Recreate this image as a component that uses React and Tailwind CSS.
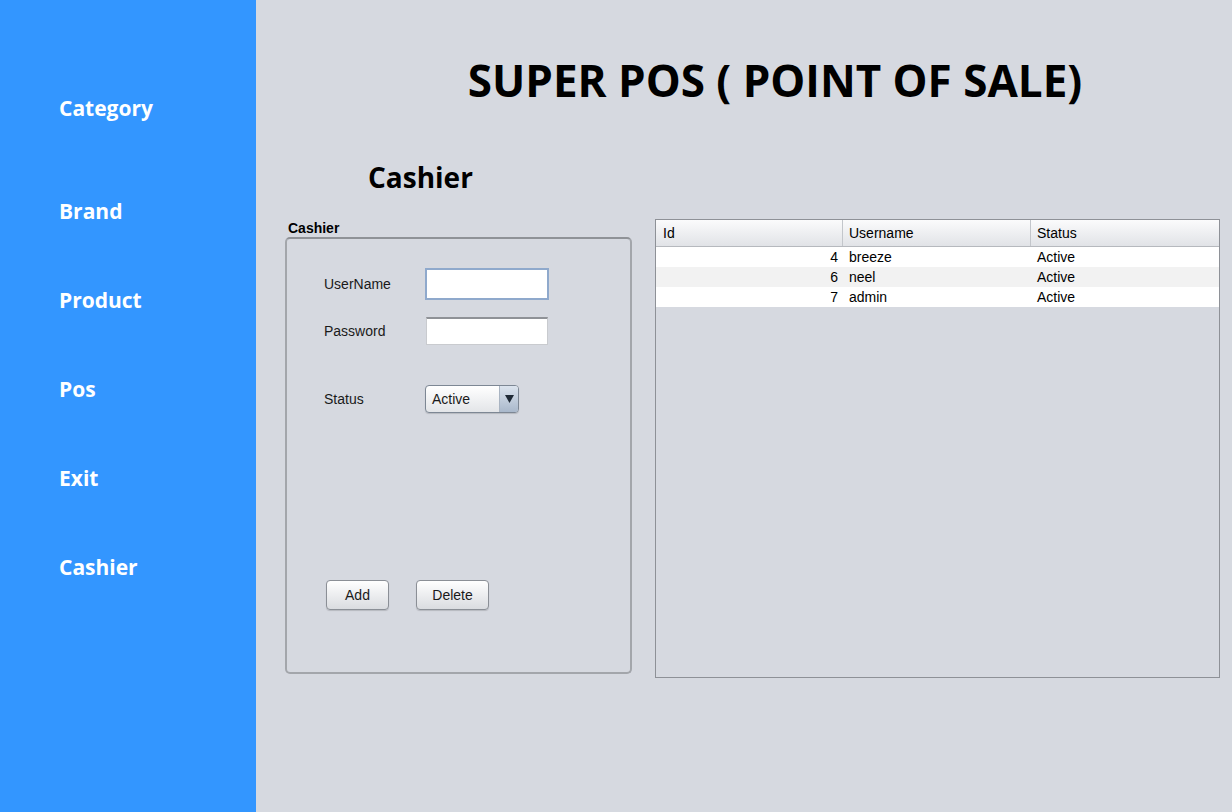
import React, { useState } from 'react';

const menuItems = [
    { label: 'Category', mt: 'mt-[93px]' },
    { label: 'Brand', mt: 'mt-[72px]' },
    { label: 'Product', mt: 'mt-[58px]' },
    { label: 'Pos', mt: 'mt-[58px]' },
    { label: 'Exit', mt: 'mt-[58px]' },
    { label: 'Cashier', mt: 'mt-[58px]' },
];

const cashiers = [
    { id: 4, username: 'breeze', status: 'Active' },
    { id: 6, username: 'neel', status: 'Active' },
    { id: 7, username: 'admin', status: 'Active' },
];

const Sidebar = () => (
    <aside className="w-[256px] shrink-0 bg-[#3396ff] pl-[59px] flex flex-col">
        {menuItems.map(item => (
            <div
                key={item.label}
                className={`${item.mt} h-[31px] leading-[31px] text-[21px] font-bold text-white font-['Open_Sans',sans-serif]`}
            >
                {item.label}
            </div>
        ))}
    </aside>
);

const CashierForm = () => {
    const [username, setUsername] = useState('');
    const [password, setPassword] = useState('');

    return (
        <div className="w-[347px] shrink-0">
            <div className="pl-[3px] h-[18px] leading-[18px] text-[14px] font-bold text-black font-['Liberation_Sans',sans-serif]">
                Cashier
            </div>
            <div className="h-[437px] rounded-[5px] border-2 border-[#a3a6ab] border-t-[#8f9297] flex flex-col font-['Liberation_Sans',sans-serif] text-[14px] text-[#1a1a1a]">
                {/* username */}
                <div className="mt-[29px] flex items-center h-[32px]">
                    <span className="w-[138px] pl-[37px] shrink-0">UserName</span>
                    <input
                        value={username}
                        onChange={e => setUsername(e.target.value)}
                        className="w-[124px] h-[32px] bg-white border-2 border-[#8fa9cc] outline-none px-1"
                    />
                </div>
                {/* password */}
                <div className="mt-[17px] flex items-center h-[28px]">
                    <span className="w-[139px] pl-[37px] shrink-0">Password</span>
                    <input
                        type="password"
                        value={password}
                        onChange={e => setPassword(e.target.value)}
                        className="w-[122px] h-[28px] bg-white border border-[#c9cbcf] border-t-[#8f9297] border-t-2 outline-none px-1"
                    />
                </div>
                {/* status */}
                <div className="mt-[40px] flex items-center h-[28px]">
                    <span className="w-[138px] pl-[37px] shrink-0">Status</span>
                    <div className="w-[94px] h-[28px] flex rounded-[4px] border border-[#7d8794] bg-gradient-to-b from-white to-[#e3e5e8] overflow-hidden shadow-[0_1px_1px_rgba(0,0,0,0.15)]">
                        <span className="flex-1 pl-[6px] leading-[26px]">Active</span>
                        <span className="w-[19px] border-l border-[#a9b4c2] bg-gradient-to-b from-[#dce4ee] to-[#a9b8cb] flex items-center justify-center">
                            <svg width="9" height="8" viewBox="0 0 9 8">
                                <path d="M0 0 L9 0 L4.5 8 Z" fill="#1f2a36" />
                            </svg>
                        </span>
                    </div>
                </div>
                {/* buttons */}
                <div className="mt-[167px] flex items-center pl-[39px] gap-[27px]">
                    <button className="w-[63px] h-[30px] rounded-[4px] border border-[#8b8f96] bg-gradient-to-b from-white to-[#dadce0] shadow-[0_1px_1px_rgba(0,0,0,0.15)]">
                        Add
                    </button>
                    <button className="w-[73px] h-[30px] rounded-[4px] border border-[#8b8f96] bg-gradient-to-b from-white to-[#dadce0] shadow-[0_1px_1px_rgba(0,0,0,0.15)]">
                        Delete
                    </button>
                </div>
            </div>
        </div>
    );
};

const CashierTable = () => (
    <div className="ml-[23px] w-[565px] h-[459px] border border-[#8e9197] font-['Liberation_Sans',sans-serif] text-[14px] text-black">
        <div className="flex h-[27px] bg-gradient-to-b from-[#fbfbfc] to-[#e1e3e7] border-b border-[#b6b9be]">
            <div className="w-[187px] pl-[7px] leading-[27px] border-r border-[#c3c6cb]">Id</div>
            <div className="w-[188px] pl-[6px] leading-[27px] border-r border-[#c3c6cb]">Username</div>
            <div className="flex-1 pl-[6px] leading-[27px]">Status</div>
        </div>
        {cashiers.map((c, i) => (
            <div key={c.id} className={`flex h-[20px] leading-[20px] ${i % 2 === 1 ? 'bg-[#f2f2f2]' : 'bg-white'}`}>
                <div className="w-[187px] pr-[5px] text-right">{c.id}</div>
                <div className="w-[188px] pl-[6px]">{c.username}</div>
                <div className="flex-1 pl-[6px]">{c.status}</div>
            </div>
        ))}
    </div>
);

const App = () => {
    return (
        <div className="flex w-[1232px] h-[812px] overflow-hidden">
            <Sidebar />
            <main className="flex-1 bg-[#d6d9e0]">
                <h1 className="pt-[51px] pl-[62px] text-center text-[44px] leading-[58px] font-bold text-black font-['Open_Sans',sans-serif]">
                    SUPER POS ( POINT OF SALE)
                </h1>
                <h2 className="mt-[49px] ml-[112px] text-[28px] leading-[38px] font-bold text-black font-['Open_Sans',sans-serif]">
                    Cashier
                </h2>
                <div className="mt-[23px] ml-[29px] flex items-start">
                    <CashierForm />
                    <CashierTable />
                </div>
            </main>
        </div>
    );
};

export default App;
